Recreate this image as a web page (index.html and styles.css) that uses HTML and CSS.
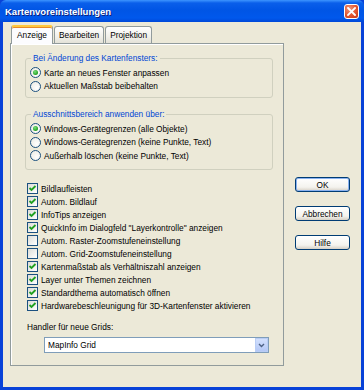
FILE: index.html
```html
<!DOCTYPE html>
<html>
<head>
<meta charset="utf-8">
<link rel="stylesheet" href="styles.css">
</head>
<body>
<div class="win">
  <div class="titlebar">
    <span class="title">Kartenvoreinstellungen</span>
    <span class="close"><svg width="9" height="9" viewBox="0 0 9 9"><path d="M1 1L8 8M8 1L1 8" stroke="#fff" stroke-width="1.8" stroke-linecap="square"/></svg></span>
  </div>
  <div class="client">
    <div class="leftcol">
      <div class="tabs">
        <div class="tab sel">Anzeige</div>
        <div class="tab">Bearbeiten</div>
        <div class="tab">Projektion</div>
      </div>
      <div class="panel">
        <fieldset class="group g1">
          <legend>Bei Änderung des Kartenfensters:</legend>
          <div class="opt"><span class="radio on"></span>Karte an neues Fenster anpassen</div>
          <div class="opt"><span class="radio"></span>Aktuellen Maßstab beibehalten</div>
        </fieldset>
        <fieldset class="group g2">
          <legend>Ausschnittsbereich anwenden über:</legend>
          <div class="opt"><span class="radio on"></span>Windows-Gerätegrenzen (alle Objekte)</div>
          <div class="opt"><span class="radio"></span>Windows-Gerätegrenzen (keine Punkte, Text)</div>
          <div class="opt"><span class="radio"></span>Außerhalb löschen (keine Punkte, Text)</div>
        </fieldset>
        <div class="checks">
          <div class="chk"><span class="box"><svg class="tick" width="9" height="9" viewBox="0 0 9 9"><path d="M1.5 4L3.5 6L7.5 2" fill="none" stroke="#21A121" stroke-width="1.8"/></svg></span>Bildlaufleisten</div>
          <div class="chk"><span class="box"><svg class="tick" width="9" height="9" viewBox="0 0 9 9"><path d="M1.5 4L3.5 6L7.5 2" fill="none" stroke="#21A121" stroke-width="1.8"/></svg></span>Autom. Bildlauf</div>
          <div class="chk"><span class="box"><svg class="tick" width="9" height="9" viewBox="0 0 9 9"><path d="M1.5 4L3.5 6L7.5 2" fill="none" stroke="#21A121" stroke-width="1.8"/></svg></span>InfoTips anzeigen</div>
          <div class="chk"><span class="box"><svg class="tick" width="9" height="9" viewBox="0 0 9 9"><path d="M1.5 4L3.5 6L7.5 2" fill="none" stroke="#21A121" stroke-width="1.8"/></svg></span>QuickInfo im Dialogfeld "Layerkontrolle" anzeigen</div>
          <div class="chk"><span class="box"></span>Autom. Raster-Zoomstufeneinstellung</div>
          <div class="chk"><span class="box"></span>Autom. Grid-Zoomstufeneinstellung</div>
          <div class="chk"><span class="box"><svg class="tick" width="9" height="9" viewBox="0 0 9 9"><path d="M1.5 4L3.5 6L7.5 2" fill="none" stroke="#21A121" stroke-width="1.8"/></svg></span>Kartenmaßstab als Verhältniszahl anzeigen</div>
          <div class="chk"><span class="box"><svg class="tick" width="9" height="9" viewBox="0 0 9 9"><path d="M1.5 4L3.5 6L7.5 2" fill="none" stroke="#21A121" stroke-width="1.8"/></svg></span>Layer unter Themen zeichnen</div>
          <div class="chk"><span class="box"><svg class="tick" width="9" height="9" viewBox="0 0 9 9"><path d="M1.5 4L3.5 6L7.5 2" fill="none" stroke="#21A121" stroke-width="1.8"/></svg></span>Standardthema automatisch öffnen</div>
          <div class="chk"><span class="box"><svg class="tick" width="9" height="9" viewBox="0 0 9 9"><path d="M1.5 4L3.5 6L7.5 2" fill="none" stroke="#21A121" stroke-width="1.8"/></svg></span>Hardwarebeschleunigung für 3D-Kartenfenster aktivieren</div>
        </div>
        <div class="handler">Handler für neue Grids:</div>
        <div class="combo">
          <span class="ctext">MapInfo Grid</span>
          <span class="cbtn"><svg width="7" height="5" viewBox="0 0 7 5"><path d="M1 1L3.5 3.5L6 1" fill="none" stroke="#4D6185" stroke-width="1.4"/></svg></span>
        </div>
      </div>
    </div>
    <div class="buttons">
      <div class="btn def">OK</div>
      <div class="btn">Abbrechen</div>
      <div class="btn">Hilfe</div>
    </div>
  </div>
</div>
</body>
</html>
```
FILE: styles.css
```css
* { box-sizing: border-box; }
html, body { margin: 0; padding: 0; }
body {
  width: 364px; height: 390px; overflow: hidden;
  font-family: "Liberation Sans", Arial, sans-serif;
  font-size: 8.3px; color: #000;
}
.win {
  width: 364px; height: 390px;
  background: #0842D8;
  display: flex; flex-direction: column;
}
.titlebar {
  height: 22px; flex: none;
  background: linear-gradient(#3D95FF 0, #0A5FEA 3px, #0055E5 10px, #0058EC 18px, #0048D8 22px);
  display: flex; align-items: center; justify-content: space-between;
  padding: 0 5px 0 5px;
  border-radius: 6px 6px 0 0;
}
.title {
  color: #fff; font-weight: bold; font-size: 9.5px;
  text-shadow: 1px 1px 0 #0A1E7C;
}
.close {
  width: 15px; height: 15px;
  border: 1px solid #fff; border-radius: 3px;
  background: radial-gradient(circle at 35% 30%, #F0967A 0, #E2542E 55%, #C73A18 100%);
  display: flex; align-items: center; justify-content: center;
}
.client {
  flex: 1; margin: 0 3px 3px 3px;
  background: #ECE9D8;
  display: flex;
  padding: 3px 0 0 7px;
}
.leftcol { width: 274px; display: flex; flex-direction: column; }
.tabs { height: 18px; display: flex; align-items: flex-end; padding-left: 1px; }
.tab {
  height: 17px; margin-right: 1px;
  border: 1px solid #919B9C; border-bottom: none;
  border-radius: 3px 3px 0 0;
  background: linear-gradient(#FFFFFF, #F0F0EA 60%, #E4E2D8);
  padding: 3px 4px 0 4px;
}
.tab.sel {
  height: 19px; margin-bottom: -1px; z-index: 1;
  background: #FCFCFE;
  border-top: 2px solid #FFC83C;
  padding: 3px 5px 0 5px;
  box-shadow: inset 0 1px 0 #E68B2C;
}
.panel {
  height: 323px;
  border: 1px solid #919B9C;
  box-shadow: inset 1px 1px 0 #fff;
  background: #ECE9D8;
  padding: 9px 10px 0 14px;
  display: flex; flex-direction: column;
}
.group {
  margin: 0; min-width: 0;
  border: 1px solid #D0D0BF; border-radius: 3px;
  padding: 3px 0 5px 4px;
}
.group legend {
  color: #0046D5; padding: 0 2px; margin-left: 1px;
  line-height: 10px;
}
.g1 { height: 45px; }
.g2 { height: 61px; margin-top: 11px; }
.opt {
  height: 13.5px; display: flex; align-items: center; white-space: nowrap;
}
.radio {
  width: 11px; height: 11px; border-radius: 50%;
  border: 1px solid #1C5180;
  background: radial-gradient(circle at 65% 65%, #fff 0, #E8E8E0 100%);
  margin-right: 3px; flex: none;
  display: flex; align-items: center; justify-content: center;
}
.radio.on::after {
  content: ""; width: 5px; height: 5px; border-radius: 50%;
  background: radial-gradient(circle at 40% 35%, #7BE07B 0, #21A121 70%);
}
.checks { margin-top: 12px; padding-left: 2px; }
.chk {
  height: 13px; display: flex; align-items: center; white-space: nowrap;
}
.box {
  width: 11px; height: 11px; flex: none;
  border: 1px solid #1C5180;
  background: linear-gradient(135deg, #DCDCD7, #fff);
  margin-right: 3px;
}
.tick { display: block; }
.handler { margin-top: 9px; padding-left: 2px; height: 12px; line-height: 12px; }
.combo {
  margin: 4px 0 0 19px; width: 225px; height: 16px;
  background: #fff; border: 1px solid #7F9DB9;
  display: flex; align-items: center; justify-content: space-between;
}
.ctext { padding-left: 3px; }
.cbtn {
  width: 13px; height: 14px;
  background: linear-gradient(#D2E0FD, #B4C8F6);
  border: 1px solid #B9CDF5;
  display: flex; align-items: center; justify-content: center;
}
.buttons {
  display: flex; flex-direction: column;
  padding-top: 152px; margin-left: 11px;
}
.btn {
  width: 55px; height: 15px;
  border: 1px solid #003C74; border-radius: 3px;
  background: linear-gradient(#FFFFFF, #F4F3EE 70%, #D6D0C5);
  display: flex; align-items: center; justify-content: center;
  margin-bottom: 14px;
}
.btn.def { box-shadow: inset 0 0 0 1px #8AB2F0; }
```
